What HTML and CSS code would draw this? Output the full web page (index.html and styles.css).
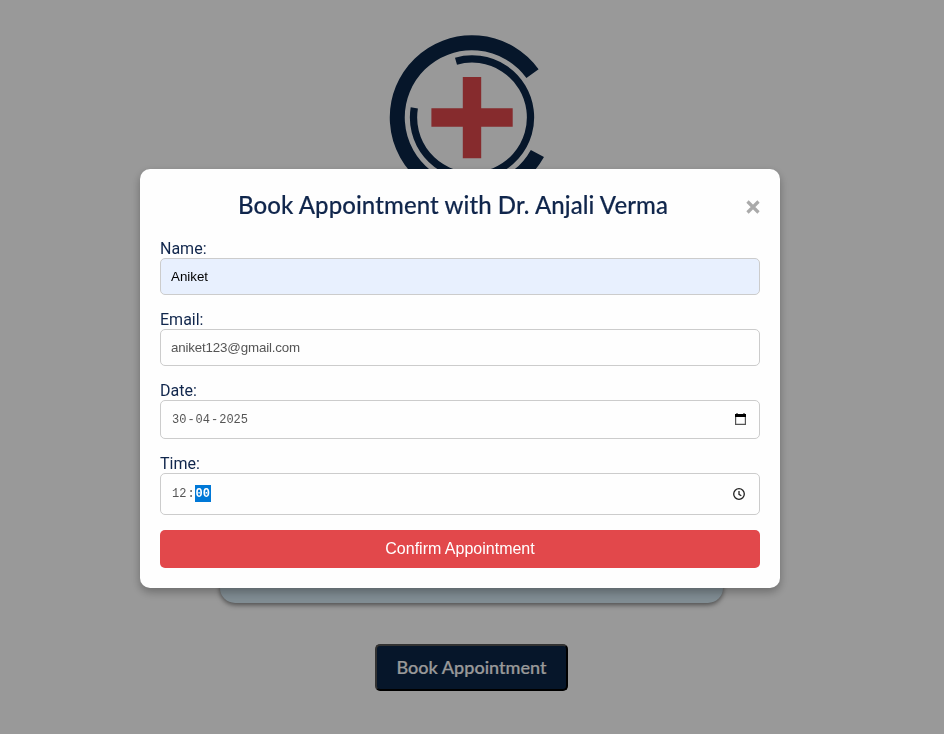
FILE: index.html
```html
<!DOCTYPE html>
<html lang="en">
<head>
<meta charset="utf-8">
<title>Book Appointment</title>
<link rel="stylesheet" href="styles.css">
</head>
<body>
<main class="page">
  <svg class="logo" viewBox="0 0 166 166" fill="none">
    <g transform="translate(83 83.5)">
      <path class="navy" stroke-width="15" d="M60.5 -43.8A74.7 74.7 0 1 0 65.4 36"/>
      <path class="navy" stroke-width="7.3" d="M-16 -56.3A58.5 58.5 0 1 1 -57.7 -9.6"/>
      <path class="cross" d="M-9.2 -40.6H9.2V-9.2H40.7V9.2H9.2V40.7H-9.2V9.2H-40.6V-9.2H-9.2Z"/>
    </g>
  </svg>
  <section class="card"></section>
  <button class="book">Book Appointment</button>
</main>
<div class="overlay">
  <form class="modal">
    <header class="head">
      <h2 class="title">Book Appointment with Dr. Anjali Verma</h2>
      <svg class="close" viewBox="0 0 14 14"><path d="M1.5 1.5L12.5 12.5M12.5 1.5L1.5 12.5"/></svg>
    </header>
    <label class="label">Name:</label>
    <div class="field filled">Aniket</div>
    <label class="label">Email:</label>
    <div class="field email">aniket123@gmail.com</div>
    <label class="label">Date:</label>
    <div class="field date">
      <div class="parts"><span>30</span>-<span>04</span>-<span>2025</span></div>
      <svg class="calendar" viewBox="0 0 11 12"><path class="frame" d="M.6 3V11.4H10.4V3"/><path d="M1.5 0H2.5V1H8.5V0H9.5V1H11V4H0V1H1.5Z"/></svg>
    </div>
    <label class="label">Time:</label>
    <div class="field time">
      <div class="parts"><span>12</span>:<span class="selected">00</span></div>
      <svg class="clock" viewBox="0 0 12 12"><circle cx="6" cy="6" r="5.3"/><path d="M6 3V6.3L8.3 7.7"/></svg>
    </div>
    <button class="confirm" type="button">Confirm Appointment</button>
  </form>
</div>
</body>
</html>
```

FILE: styles.css
```css
* { box-sizing: border-box; }
body {
  margin: 0;
  height: 734px;
  overflow: hidden;
  background: #fff;
  color: #10264c;
  font-family: Roboto, sans-serif;
}
.page {
  display: flex;
  flex-direction: column;
  align-items: center;
  width: 943px;
  padding-top: 34px;
}
.logo { display: block; width: 166px; height: 166px; }
.navy { stroke: #0a2546; }
.cross { fill: #e0484b; }
.card {
  width: 503px;
  height: 343px;
  margin-top: 60px;
  border-radius: 15px;
  background: #d5e9f4;
  box-shadow: 0 2px 5px rgba(0, 0, 0, .5);
}
.book {
  width: 193px;
  height: 47px;
  margin-top: 41px;
  padding: 0 0 2px;
  border: 2px outset #000;
  border-radius: 5px;
  background: #0a2546;
  color: #fff;
  font: 500 18px/1 Lato, sans-serif;
  letter-spacing: .02px;
  -webkit-text-stroke: .2px currentColor;
  white-space: nowrap;
}
.overlay {
  position: fixed;
  inset: 0;
  padding: 169px 164px 0 140px;
  background: rgba(0, 0, 0, .4);
}
.modal {
  width: 640px;
  height: 419px;
  padding: 20px;
  border-radius: 10px;
  background: #fefefe;
  box-shadow: 0 4px 10px rgba(0, 0, 0, .3);
}
.head {
  display: flex;
  align-items: center;
  height: 33px;
  margin-bottom: 17px;
}
.title {
  flex: 1;
  margin: 0;
  padding-bottom: 2px;
  text-align: center;
  font: 500 24px/31px Lato, sans-serif;
  letter-spacing: .08px;
  -webkit-text-stroke: .15px currentColor;
  white-space: nowrap;
}
.close {
  width: 14px;
  height: 14px;
  margin-top: 2px;
  stroke: #aaa;
  stroke-width: 3.2;
}
.label { display: block; font-size: 16px; line-height: 19px; }
.field {
  display: flex;
  align-items: center;
  height: 37px;
  margin-bottom: 15px;
  padding: 0 10px;
  border: 1px solid #ccc;
  border-radius: 5px;
  color: #555;
  font: 13.333px "Liberation Sans", sans-serif;
}
.filled { background: #e8f0fe; color: #000; }
.email { letter-spacing: -.16px; }
.date, .time {
  justify-content: space-between;
  font: 12px/17px "Liberation Mono", monospace;
}
.date { height: 39px; padding-right: 13px; }
.date .parts { padding-top: 2px; }
.time { height: 42px; padding-right: 14px; }
.time .parts { margin-bottom: 1px; line-height: 16px; }
.time .parts { padding-top: 1px; }
.parts { display: flex; }
.parts span { padding: 0 1px; }
.parts .selected {
  margin-top: -1px;
  padding-top: 1px;
  background: #0078d7;
  color: #fff;
  font-weight: 700;
}
.calendar { width: 11px; height: 12px; margin-bottom: 1px; fill: #000; }
.calendar .frame { fill: none; stroke: #555; stroke-width: 1.2; }
.clock {
  width: 12px;
  height: 12px;
  fill: none;
  stroke: #222;
  stroke-width: 1.3;
}
.confirm {
  display: block;
  width: 600px;
  height: 38px;
  padding: 0;
  border: 0;
  border-radius: 5px;
  background: #e2484b;
  color: #fff;
  font: 16px "Liberation Sans", sans-serif;
}
```
